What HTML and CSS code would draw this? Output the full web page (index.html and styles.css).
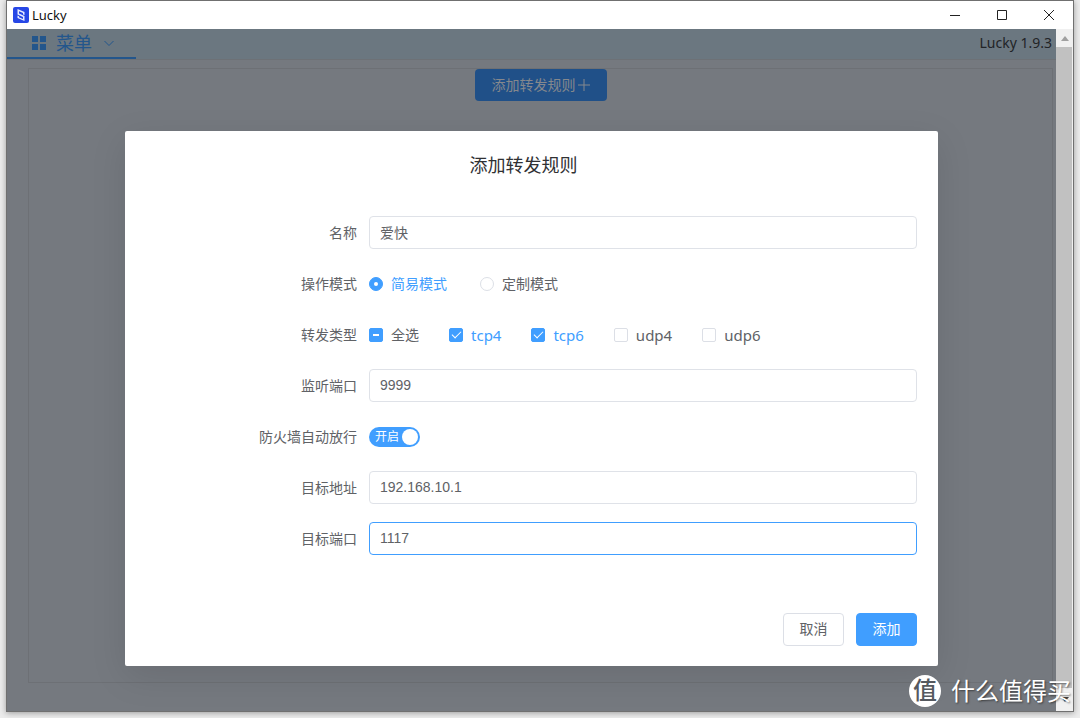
FILE: index.html
```html
<!DOCTYPE html>
<html lang="zh-CN">
<head>
<meta charset="utf-8">
<title>Lucky</title>
<link rel="stylesheet" href="styles.css">
</head>
<body>
<div class="window">
  <header class="titlebar">
    <svg class="app-icon" viewBox="0 0 16 16" aria-hidden="true">
      <rect width="16" height="16" rx="2" fill="#2747e6"/>
      <path d="M4.500 2 11.500 5v3L10 7.500V6L6 4.300v2.200l5.500 2.500v5L4.500 11V8.500L6 9.200v1L10 12v-2L4.500 7.500z" fill="#e8ecff"/>
    </svg>
    <span class="app-name">Lucky</span>
    <div class="window-buttons">
      <button type="button" aria-label="最小化"><svg viewBox="0 0 12 12"><path d="M1 6.500h10"/></svg></button>
      <button type="button" aria-label="最大化"><svg viewBox="0 0 12 12"><path d="M1.500 1.500h9v9h-9z"/></svg></button>
      <button type="button" aria-label="关闭"><svg viewBox="0 0 12 12"><path d="M1 1l10 10M11 1 1 11"/></svg></button>
    </div>
  </header>
  <div class="viewport">
    <div class="page">
      <nav class="navbar">
        <button type="button" class="menu">
          <svg class="grid-icon" viewBox="0 0 14 14"><path d="M0 0h6v6H0zM8 0h6v6H8zM0 8h6v6H0zM8 8h6v6H8z"/></svg>
          <span>菜单</span>
          <svg class="chevron" viewBox="0 0 10 10"><path d="M.5 3 5 7.500 9.500 3"/></svg>
        </button>
        <span class="version">Lucky 1.9.3</span>
      </nav>
      <main class="content">
        <button type="button" class="add-rule">添加转发规则<svg viewBox="0 0 12 12"><path d="M6 0v12M0 6h12"/></svg></button>
      </main>
      <div class="overlay">
        <form class="dialog" role="dialog" aria-labelledby="dialog-title">
          <h2 class="dialog-title" id="dialog-title">添加转发规则</h2>
          <div class="rows">
            <div class="row">
              <label class="label" for="name">名称</label>
              <input class="field" id="name" type="text" value="爱快">
            </div>
            <div class="row" role="radiogroup" aria-labelledby="mode-label">
              <span class="label" id="mode-label">操作模式</span>
              <label class="choice choice-wide"><input type="radio" name="mode" checked><span>简易模式</span></label>
              <label class="choice"><input type="radio" name="mode"><span>定制模式</span></label>
            </div>
            <div class="row" role="group" aria-labelledby="type-label">
              <span class="label" id="type-label">转发类型</span>
              <label class="choice"><input type="checkbox" class="partial"><span>全选</span></label>
              <label class="choice protocol"><input type="checkbox" checked><span>tcp4</span></label>
              <label class="choice protocol"><input type="checkbox" checked><span>tcp6</span></label>
              <label class="choice protocol"><input type="checkbox"><span>udp4</span></label>
              <label class="choice protocol"><input type="checkbox"><span>udp6</span></label>
            </div>
            <div class="row">
              <label class="label" for="listen-port">监听端口</label>
              <input class="field" id="listen-port" type="text" value="9999">
            </div>
            <div class="row">
              <label class="label" for="firewall">防火墙自动放行</label>
              <label class="switch"><input id="firewall" type="checkbox" role="switch" checked><span>开启</span></label>
            </div>
            <div class="row">
              <label class="label" for="target">目标地址</label>
              <input class="field" id="target" type="text" value="192.168.10.1">
            </div>
            <div class="row">
              <label class="label" for="target-port">目标端口</label>
              <input class="field active" id="target-port" type="text" value="1117">
            </div>
          </div>
          <footer class="actions">
            <button type="button" class="button">取消</button>
            <button type="button" class="button primary">添加</button>
          </footer>
        </form>
      </div>
    </div>
    <div class="scrollbar" aria-hidden="true">
      <div class="arrow"><svg viewBox="0 0 8 5"><path d="M0 5 4 0l4 5z" fill="#a0a0a0"/></svg></div>
      <div class="thumb"></div>
      <div class="arrow arrow-down"><svg viewBox="0 0 8 5"><path d="M0 0h8L4 5z" fill="#404040"/></svg></div>
    </div>
  </div>
</div>
<div class="watermark"><span class="badge">值</span><span>什么值得买</span></div>
</body>
</html>
```
FILE: styles.css
```css
* {
  box-sizing: border-box;
}

body {
  margin: 0;
  height: 100vh;
  padding: 0 6px 6px;
  background: #ececec;
  color: #606266;
  font: 14px/20px "Noto Sans", "Noto Sans CJK SC", sans-serif;
  position: relative;
  overflow: hidden;
}

button,
input {
  font: inherit;
  color: inherit;
  margin: 0;
}

button {
  border: 0;
  padding: 0;
  background: none;
}

.window {
  height: 100%;
  display: flex;
  flex-direction: column;
  border: 1px solid #707070;
  box-shadow: 0 1px 6px rgba(0, 0, 0, 0.35);
}

.titlebar {
  flex: none;
  height: 28px;
  display: flex;
  align-items: center;
  padding: 0 1px 0 6px;
  background: #fff;
}

.app-icon {
  width: 16px;
  height: 16px;
}

.app-name {
  margin-left: 3px;
  color: #111;
  font-size: 13px;
}

.window-buttons {
  margin-left: auto;
  display: flex;
}

.window-buttons button {
  width: 47px;
  height: 28px;
  display: flex;
  align-items: center;
  justify-content: center;
}

.window-buttons svg {
  width: 12px;
  height: 12px;
  fill: none;
  stroke: #222;
}

.viewport {
  flex: 1;
  min-height: 0;
  display: flex;
}

.page {
  flex: 1;
  position: relative;
  display: flex;
  flex-direction: column;
  background: #75797f;
}

.navbar {
  height: 31px;
  display: flex;
  justify-content: space-between;
  background: #6b7780;
  border-bottom: 1px solid #6d7176;
}

.menu {
  display: flex;
  align-items: center;
  width: 129px;
  height: 30px;
  padding-left: 25px;
  border-bottom: 2px solid #23568c;
  color: #23568c;
  font-size: 18px;
}

.grid-icon {
  width: 14px;
  height: 14px;
  margin-right: 10px;
  fill: #23568c;
}

.chevron {
  width: 10px;
  height: 10px;
  margin-left: 12px;
  fill: none;
  stroke: #23568c;
}

.version {
  padding-right: 4px;
  color: #222427;
  line-height: 28px;
}

.content {
  flex: 1;
  margin: 8px 3px 28px 21px;
  border: 1px solid #6d7075;
  text-align: center;
}

.add-rule {
  display: inline-flex;
  align-items: center;
  height: 32px;
  padding: 0 17px;
  border-radius: 4px;
  background: #205088;
  color: #85888d;
}

.add-rule svg {
  width: 12px;
  height: 12px;
  margin-left: 2px;
  fill: none;
  stroke: #85888d;
}

.overlay {
  position: absolute;
  inset: 0;
  display: flex;
  align-items: flex-start;
  justify-content: center;
  padding-top: 102px;
}

.dialog {
  width: 77.5%;
  padding: 21px 21px 20px;
  background: #fff;
  border-radius: 2px;
  box-shadow: 0 10px 36px rgba(0, 0, 0, 0.1);
}

.dialog-title {
  margin: 0 16px 0 0;
  color: #303133;
  font-size: 18px;
  font-weight: 400;
  line-height: 26px;
  text-align: center;
}

.rows {
  display: grid;
  gap: 18px;
  padding-top: 38px;
}

.row {
  height: 33px;
  display: flex;
  align-items: center;
}

.label {
  flex: none;
  width: 223px;
  padding-right: 12px;
  text-align: right;
}

.field {
  flex: 1;
  min-width: 0;
  height: 33px;
  padding: 0 10px 2px;
  border: 1px solid #dfe2e8;
  border-radius: 4px;
  background: #fff;
  outline: 0;
  font-family: "Liberation Sans", "Noto Sans CJK SC", sans-serif;
}

.active {
  border-color: #409eff;
}

.choice {
  display: flex;
  align-items: center;
  gap: 8px;
  margin-right: 30px;
}

.choice-wide {
  margin-right: 33px;
}

.protocol {
  font-size: 15px;
}

.choice input {
  appearance: none;
  width: 14px;
  height: 14px;
  border: 1px solid #dcdfe6;
  border-radius: 2px;
  background: #fff;
  display: grid;
  place-items: center;
}

.choice input[type="radio"] {
  border-radius: 50%;
}

.choice input:checked,
.choice .partial {
  border-color: #409eff;
  background: #409eff;
}

.choice input:checked + span {
  color: #409eff;
}

.choice input[type="radio"]:checked::after {
  content: "";
  width: 4px;
  height: 4px;
  border-radius: 50%;
  background: #fff;
}

.choice input[type="checkbox"]:checked::after {
  content: "";
  width: 4px;
  height: 8px;
  margin-bottom: 2px;
  border: solid #fff;
  border-width: 0 1px 1px 0;
  transform: rotate(45deg);
}

.choice .partial::after {
  content: "";
  width: 6px;
  height: 2px;
  background: #fff;
}

.switch {
  position: relative;
  width: 51px;
  height: 20px;
  border-radius: 10px;
  background: #409eff;
  color: #fff;
  font-size: 12px;
  padding-left: 6px;
}

.switch input {
  appearance: none;
  position: absolute;
  top: 2px;
  right: 2px;
  width: 16px;
  height: 16px;
  border-radius: 50%;
  background: #fff;
}

.actions {
  display: flex;
  justify-content: flex-end;
  gap: 12px;
  padding-top: 58px;
}

.button {
  width: 61px;
  height: 33px;
  padding-bottom: 2px;
  border: 1px solid #dcdfe6;
  border-radius: 4px;
  background: #fff;
}

.primary {
  border-color: #409eff;
  background: #409eff;
  color: #fff;
}

.scrollbar {
  width: 17px;
  display: flex;
  flex-direction: column;
  background: #f0f0f0;
}

.arrow {
  height: 18px;
  display: flex;
  align-items: center;
  justify-content: center;
}

.arrow svg {
  width: 8px;
  height: 5px;
}

.arrow-down {
  height: 23px;
}

.thumb {
  flex: 1;
  margin-right: 1px;
  background: #c1c1c1;
}

.watermark {
  position: absolute;
  right: 9px;
  bottom: 11px;
  display: flex;
  align-items: center;
  gap: 10px;
  color: #fff;
  font-size: 24px;
  line-height: 32px;
  text-shadow: 1px 1px 2px rgba(0, 0, 0, 0.5);
}

.badge {
  width: 32px;
  height: 32px;
  border-radius: 50%;
  background: #fff;
  color: #55595f;
  font-weight: 500;
  line-height: 30px;
  text-align: center;
  text-shadow: none;
}
```
